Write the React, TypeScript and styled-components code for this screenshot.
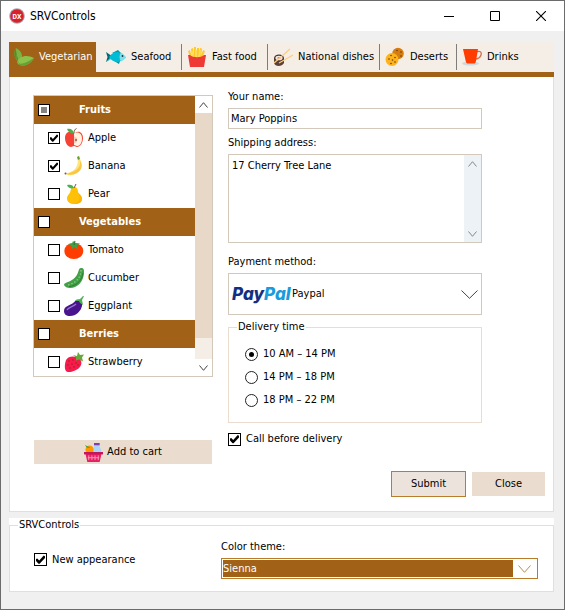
import React, { useEffect, useRef, useState } from "react";
import styled, { createGlobalStyle } from "styled-components";

const color = {
  sienna: "#a16116",
  siennaEdge: "#b87c2a",
  sand: "#eaddd0",
  cream: "#f5eee7",
  field: "#d3c9bb",
  thumb: "#e8d8c7",
  shell: "#f0f0f0",
};

const GlobalStyle = createGlobalStyle`
  * { box-sizing: border-box; }
  body { margin: 0; background: ${color.shell}; }
  body, button, input, select, textarea {
    font-family: "DejaVu Sans Condensed", "DejaVu Sans", sans-serif;
    font-size: 11px;
    line-height: 14px;
    color: #000;
  }
`;

/* ---------- window frame ---------- */

const Window = styled.div`
  display: flex;
  flex-direction: column;
  min-height: 100vh;
  border: 1px solid #6b6b6b;
  background: ${color.shell};
`;

const TitleBar = styled.header`
  display: flex;
  align-items: center;
  height: 30px;
  padding-left: 8px;
  background: #fff;
`;

const Title = styled.h1`
  flex: 1;
  margin: 0 0 0 5px;
  font-size: 12px;
  font-weight: 400;
  line-height: 16px;
`;

const CaptionButton = styled.button`
  display: grid;
  place-items: center;
  width: 46px;
  height: 30px;
  padding: 0;
  border: 0;
  background: transparent;
`;

const Body = styled.main`
  display: flex;
  flex-direction: column;
  gap: 6px;
  padding: 11px 10px 17px 8px;
`;

/* ---------- tabs ---------- */

const TabBar = styled.nav`
  display: flex;
  height: 35px;
  background: ${color.cream};
  border-bottom: 5px solid ${color.sienna};
`;

const Tab = styled.button<{ $width: number; $inset: number; $active?: boolean; $divider?: boolean }>`
  position: relative;
  display: flex;
  align-items: center;
  flex: 0 0 ${(p) => p.$width}px;
  gap: 5px;
  height: 30px;
  padding: 0 0 0 ${(p) => p.$inset}px;
  border: 0;
  white-space: nowrap;
  background: ${(p) => (p.$active ? color.sienna : "transparent")};
  color: ${(p) => (p.$active ? "#fff" : "#000")};

  &::after {
    content: "";
    display: ${(p) => (p.$divider ? "block" : "none")};
    position: absolute;
    right: 0;
    top: 2px;
    bottom: 2px;
    width: 1px;
    background: #7d7d7d;
  }
`;

const Page = styled.section`
  display: grid;
  grid-template-columns: 180px minmax(0, 1fr);
  column-gap: 15px;
  padding: 13px 8px 14px 23px;
  border: 1px solid ${color.sand};
  border-top: 0;
  background: #fff;
`;

/* ---------- product list ---------- */

const ListColumn = styled.div`
  display: flex;
  flex-direction: column;
  gap: 63px;
  padding-top: 5px;
`;

const ListBox = styled.div`
  display: flex;
  border: 1px solid ${color.field};
`;

const Items = styled.div`
  flex: 1;
`;

const GroupRow = styled.label`
  display: flex;
  align-items: center;
  gap: 29px;
  height: 28px;
  padding-left: 4px;
  background: ${color.sienna};
  color: #fff;
  font-weight: 700;
`;

const ItemRow = styled.label`
  display: flex;
  align-items: center;
  height: 28px;
  padding-left: 14px;
  gap: 4px;
`;

const Scroll = styled.div<{ $track: string }>`
  display: flex;
  flex-direction: column;
  justify-content: space-between;
  flex: 0 0 17px;
  background: ${(p) => p.$track};
`;

const ScrollButton = styled.button<{ $fill: string }>`
  display: grid;
  place-items: center;
  height: 17px;
  padding: 0;
  border: 0;
  background: ${(p) => p.$fill};
`;

const ScrollThumb = styled.div`
  flex: 0 0 225px;
  margin-bottom: auto;
  background: ${color.thumb};
`;

/* ---------- form controls ---------- */

const Check = styled.input`
  appearance: none;
  display: grid;
  place-items: center;
  flex: none;
  width: 12px;
  height: 12px;
  margin: 0;
  border: 1px solid #000;
  background: #fff;

  &::before {
    content: "";
    width: 8px;
    height: 8px;
  }
  &:checked::before {
    background: #000;
    clip-path: polygon(0 45%, 14% 38%, 36% 62%, 86% 6%, 100% 14%, 100% 32%, 40% 96%, 28% 96%, 0 66%);
  }
  &:indeterminate::before {
    width: 6px;
    height: 6px;
    background: #848484;
    clip-path: none;
  }
`;

const LargeCheck = styled(Check)`
  width: 13px;
  height: 13px;

  &::before {
    width: 9px;
    height: 9px;
  }
`;

const Radio = styled.input`
  appearance: none;
  display: grid;
  place-items: center;
  flex: none;
  width: 13px;
  height: 13px;
  margin: 0;
  border: 1px solid #222;
  border-radius: 50%;
  background: #fff;

  &:checked::before {
    content: "";
    width: 5px;
    height: 5px;
    border-radius: 50%;
    background: #000;
  }
`;

const Choice = styled.label`
  display: flex;
  align-items: center;
  gap: 5px;
`;

const Form = styled.form`
  display: flex;
  flex-direction: column;
`;

const Fields = styled.div`
  display: flex;
  flex-direction: column;
  padding-right: 63px;
`;

const FieldLabel = styled.label`
  height: 14px;
  margin-bottom: 4px;
`;

const TextInput = styled.input`
  height: 21px;
  margin-bottom: 7px;
  padding: 0 2px;
  border: 1px solid ${color.field};
  border-radius: 0;
  outline: none;
`;

const AreaBox = styled.div`
  display: flex;
  height: 89px;
  margin-bottom: 12px;
  border: 1px solid ${color.field};
`;

const Area = styled.textarea`
  flex: 1;
  min-width: 0;
  padding: 4px 3px;
  border: 0;
  outline: none;
  resize: none;
  overflow: hidden;
`;

const Combo = styled.div`
  display: flex;
  align-items: center;
  height: 42px;
  margin-bottom: 5px;
  padding: 0 3px;
  border: 1px solid ${color.field};
`;

const PayPalMark = styled.span`
  flex: 0 0 60px;
  font-family: Inter, sans-serif;
  font-size: 17px;
  font-style: italic;
  font-weight: 800;
  line-height: 24px;
  color: #123083;
`;

const PalPart = styled.span`
  color: #1a9bdc;
`;

const ComboSelect = styled.select`
  appearance: none;
  flex: 1;
  min-width: 0;
  height: 40px;
  padding: 0;
  border: 0;
  outline: none;
  background: transparent;
`;

const TimeGroup = styled.fieldset`
  display: flex;
  flex-direction: column;
  gap: 9px;
  min-width: 0;
  height: 103px;
  margin: 0 0 9px;
  padding: 13px 16px 0;
  border: 1px solid ${color.sand};
`;

const Legend = styled.legend`
  padding: 0 1px;
  margin-left: -8px;
`;

const Actions = styled.div`
  display: flex;
  justify-content: flex-end;
  align-items: center;
  gap: 6px;
  margin-top: 25px;
`;

const PushButton = styled.button`
  display: flex;
  align-items: center;
  justify-content: center;
  gap: 4px;
  height: 24px;
  padding: 0;
  border: 0;
  background: ${color.sand};
`;

const CartButton = styled(PushButton)`
  margin: 0 1px;
`;

const CloseButton = styled(PushButton)`
  width: 73px;
`;

const SubmitButton = styled(PushButton)`
  width: 75px;
  height: 26px;
  border: 1px solid ${color.siennaEdge};
  background: #ebe3dc;
`;

/* ---------- appearance panel ---------- */

const AppearancePanel = styled.div`
  background: #fff;
`;

const AppearanceGroup = styled.fieldset`
  display: grid;
  grid-template-columns: 187px minmax(0, 1fr);
  min-width: 0;
  margin: 0;
  padding: 8px 15px 12px 24px;
  border: 1px solid ${color.sand};
`;

const PanelLegend = styled.legend`
  margin-left: -16px;
  padding: 0 1px;
`;

const ThemeField = styled.div`
  display: flex;
  flex-direction: column;
`;

const ThemeCombo = styled.div`
  display: flex;
  align-items: center;
  height: 21px;
  padding: 1px 6px 1px 1px;
  gap: 5px;
  border: 1px solid ${color.siennaEdge};
`;

const ThemeSelect = styled.select`
  appearance: none;
  flex: 1;
  min-width: 0;
  height: 17px;
  padding: 0;
  border: 0;
  border-radius: 0;
  outline: none;
  background: ${color.sienna};
  color: #fff;
`;

/* ---------- icons ---------- */

const Svg = styled.svg`
  flex: none;
  display: block;
`;

type IconProps = { size?: number; children: React.ReactNode };
const Icon = ({ size = 20, children }: IconProps) => (
  <Svg width={size} height={size} viewBox="0 0 20 20" aria-hidden="true">
    {children}
  </Svg>
);

type ChevronProps = { w: number; h: number; up?: boolean; stroke?: string };
const Chevron = ({ w, h, up, stroke = "#444" }: ChevronProps) => (
  <Svg width={w} height={h} viewBox={`0 0 ${w} ${h}`} aria-hidden="true">
    <polyline
      fill="none"
      stroke={stroke}
      points={
        up
          ? `0.5,${h - 0.5} ${w / 2},0.7 ${w - 0.5},${h - 0.5}`
          : `0.5,0.5 ${w / 2},${h - 0.7} ${w - 0.5},0.5`
      }
    />
  </Svg>
);

const Leaf = () => (
  <Icon>
    <path d="M2 1c4 2 6 5 6 8 0 2-1 4-4 5C0 11-1 6 2 1z" fill="#7cb342" />
    <path d="M2 1c0 5 1 9 3 13C0 12-1 6 2 1z" fill="#558b2f" />
    <path d="M3 15c2-6 10-8 17-4-3 6-11 10-16 6z" fill="#8bc34a" />
    <path d="M20 11c-3 6-11 10-16 6 6 0 11-3 16-6z" fill="#689f38" />
    <path d="M2.500 8c0 4 1 7 3 9" stroke="#689f38" strokeWidth=".8" fill="none" />
  </Icon>
);

const Fish = () => (
  <Icon>
    <path d="M0 5l5 3.500v3L0 15l1.500-5z" fill="#006978" />
    <path d="M0 15l5-5 1 1.500z" fill="#4dd0e1" />
    <path d="M6 6l6-3 3 3zM8 14l5 3 1-3z" fill="#0097a7" />
    <path d="M3 10c4-5 9-7 14-2l3 2.500-3 2c-5 4-10 3-14-2.500z" fill="#00bcd4" />
    <path d="M15 5.500c2 1 4 3 5 5-1 1.500-3 3-5 4-2-3-2-6 0-9z" fill="#80deea" />
    <circle cx="16.500" cy="9" r=".9" fill="#263238" />
  </Icon>
);

const Fries = () => (
  <Icon>
    <path d="M1 4l2-1 2 8H3zM4 2l2-1 1 9H5zM7 0h2v10H7zM10 1h2v9h-2zM13 1l2 .5L14 10h-2zM16 3l2 1-3 8h-2z" fill="#ffc928" />
    <path d="M4 5l2-1 1 8H5zM8 3h2v8H8zM12 3h2l-1 8h-2z" fill="#ffdc60" />
    <path d="M1 8l2 0c3 3 11 3 14 0h2l-2 12H3z" fill="#ee3934" />
  </Icon>
);

const Sushi = () => (
  <Icon>
    <path d="M1 11v5c1 4 8 4 10 0v-5z" fill="#5d4037" />
    <ellipse cx="6" cy="11" rx="5" ry="3.500" fill="#4e342e" />
    <ellipse cx="6" cy="11" rx="3.600" ry="2.300" fill="#efebe9" />
    <ellipse cx="6" cy="11" rx="1.700" ry="1.100" fill="#ef6c57" />
    <path d="M1 16L17 2M6 16l14-8" stroke="#ffcc80" strokeWidth="1.200" />
  </Icon>
);

const Cookies = () => (
  <Icon>
    <circle cx="13" cy="6.500" r="5.800" fill="#d67d10" />
    <circle cx="7" cy="12.500" r="6.500" fill="#fdb31b" />
    <g fill="#6d3a16">
      <circle cx="12" cy="3.500" r=".8" />
      <circle cx="16" cy="5" r=".8" />
      <circle cx="16" cy="9" r=".8" />
      <circle cx="6" cy="8.500" r=".8" />
      <circle cx="10" cy="10.500" r=".8" />
      <circle cx="4" cy="12" r=".8" />
      <circle cx="7.500" cy="13" r=".8" />
      <circle cx="10" cy="15" r=".8" />
      <circle cx="6" cy="16.500" r=".8" />
    </g>
  </Icon>
);

const Cup = () => (
  <Icon>
    <ellipse cx="8.500" cy="16.500" rx="8.500" ry="2" fill="#cfd8dc" />
    <path d="M14 5c4-1.500 6 0 5 3s-3 4-6 4" stroke="#d96b4a" strokeWidth="1.300" fill="none" />
    <path d="M1 2h15l-2 12c-.5 2-1 2.500-2 2.500H6c-1 0-2-.5-2.300-2.500z" fill="#ff3d00" />
  </Icon>
);

const Apple = () => (
  <Icon>
    <path d="M9 5C5 2 1 5 1 10s3 9 6 9l3-1 3 1c3 0 6-4 6-9s-4-8-8-5z" fill="#f44336" />
    <path d="M10 5.500c4-2.500 8 0 8 5S15.500 18 13 18l-3-1z" fill="#fff3e0" />
    <path d="M10 8.500c4 0 5 6 0 7z" fill="#ffccbc" />
    <ellipse cx="12" cy="12" rx=".7" ry="1.200" fill="#5d4037" />
    <path d="M10 5c0-2 1-4 2.500-4.500" stroke="#795548" fill="none" />
    <path d="M3 1c4-1 6 1 7 4-3 1-6-1-7-4z" fill="#4caf50" />
  </Icon>
);

const Banana = () => (
  <Icon>
    <path d="M13 1l2-1 1 3c4 7 1 13-6 15.500-4 1.300-7 1-9-1 6-1 10-3 12-8 1-3 1-6 0-8.500z" fill="#ffe57f" />
    <path d="M15.500 4c2 6-1 11-13 13.800 2 1.200 5 1.200 7.500.5 7-2.300 10-8 5.500-14.300z" fill="#fbc740" />
    <path d="M13 1l2-1 1 3-2 1z" fill="#689f38" />
    <circle cx="1.500" cy="17.500" r="1" fill="#795548" />
  </Icon>
);

const Pear = () => (
  <Icon>
    <path d="M10 3c3 0 4 2 4 5 1 2 4 3 4 7 0 3-3 5-7.500 5S3 18 3 14.500C3 11 6 10 6.500 7 7 4 8 3 10 3z" fill="#ffc107" />
    <path d="M14 9c3 5 1 9-4 10.800 6 0 8-2 8-5 0-2-2-4-4-5.800z" fill="#ffb300" />
    <path d="M10 4l2-4" stroke="#795548" />
    <path d="M3 1c4-1 6 0 7 3-3 1-6 0-7-3z" fill="#4caf50" />
  </Icon>
);

const Tomato = () => (
  <Icon>
    <ellipse cx="9.800" cy="11" rx="9.500" ry="8" fill="#ff3d00" />
    <path d="M4 4l4-.5L9 1l2 2 5 .5-3 2 1 4-3.500-2.500L8 9l-.500-3z" fill="#43a047" />
    <path d="M10 5l1-4" stroke="#2e7d32" strokeWidth="1.200" />
  </Icon>
);

const Cucumber = () => (
  <Icon>
    <path d="M17 0c3 0 3 2 3 4 0 9-6 16-14 16-3 0-5-1-6-3 0-2 2-2 4-3C9 12 13 9 14.500 3 15 1 15.500 0 17 0z" fill="#43a047" />
    <path d="M17 2C17 10 11 16 3 17" stroke="#81c784" strokeWidth="1.400" strokeDasharray="1.500 1.800" fill="none" />
    <path d="M19 5c-1 8-7 13-14 13.500" stroke="#2e7d32" fill="none" />
  </Icon>
);

const Eggplant = () => (
  <Icon>
    <path d="M12 4c4-1 7 2 6 6-1 5-6 10-12 10C2 20 0 18 0 15c0-6 8-5 12-11z" fill="#4a148c" />
    <path d="M3 14c1-3 6-3 9-6" stroke="#9575cd" strokeWidth="1.300" fill="none" />
    <path d="M12 4l4-1 3-3h1l-2 4 1 5-3-2-1-2-3 0z" fill="#4caf50" />
  </Icon>
);

const Strawberry = () => (
  <Icon>
    <path d="M2 8c3-5 10-4 14-1 3 4 1 9-4 11-4 2-8 3-10 1-2-3-1-8 0-11z" fill="#f9194d" />
    <path d="M9 3l4 1 1-4 2 3 4-.5-2 3 1 4-4-2-3 1 0-3z" fill="#66a83a" />
    <g fill="#b3262a">
      <circle cx="5" cy="9" r=".9" />
      <circle cx="9" cy="8" r=".9" />
      <circle cx="4" cy="13" r=".9" />
      <circle cx="8" cy="12" r=".9" />
      <circle cx="12" cy="11" r=".9" />
      <circle cx="6" cy="16" r=".9" />
      <circle cx="10" cy="15" r=".9" />
      <circle cx="14" cy="13" r=".9" />
    </g>
  </Icon>
);

const Basket = () => (
  <Icon size={19}>
    <circle cx="6" cy="7" r="4.500" fill="#ff9800" />
    <path d="M1 2l6 3-4 0z" fill="#43a047" />
    <path d="M11 3h5l2 4v4h-8V6z" fill="#a9d6f8" />
    <path d="M10.500 0h6v2.500h-6z" fill="#7e3fb5" />
    <path d="M1.500 11h17l-2 9h-13z" fill="#e91e63" />
    <path d="M0 9.500h20v2.500H0z" fill="#c2185b" />
    <path d="M5 13v5M8.300 13v5M11.600 13v5M15 13v5M4 15.500h12" stroke="#f8a8c4" strokeWidth=".9" />
  </Icon>
);

const AppMark = () => (
  <Svg width="16" height="16" viewBox="0 0 16 16" aria-hidden="true">
    <circle cx="8" cy="8" r="7.800" fill="#a9a9a9" />
    <circle cx="8" cy="8" r="6.800" fill="#d9202e" />
    <text x="8" y="10.500" textAnchor="middle" fontFamily="Roboto, sans-serif" fontSize="7" fontWeight="700" fill="#fff">
      DX
    </text>
  </Svg>
);

/* ---------- data ---------- */

const tabs = [
  { label: "Vegetarian", icon: <Leaf />, width: 87, inset: 5, divider: false },
  { label: "Seafood", icon: <Fish />, width: 86, inset: 10, divider: true },
  { label: "Fast food", icon: <Fries />, width: 86, inset: 5, divider: true },
  { label: "National dishes", icon: <Sushi />, width: 112, inset: 5, divider: true },
  { label: "Deserts", icon: <Cookies />, width: 77, inset: 5, divider: true },
  { label: "Drinks", icon: <Cup />, width: 70, inset: 5, divider: false },
];

const groups = [
  {
    name: "Fruits",
    partial: true,
    items: [
      { name: "Apple", icon: <Apple />, on: true },
      { name: "Banana", icon: <Banana />, on: true },
      { name: "Pear", icon: <Pear />, on: false },
    ],
  },
  {
    name: "Vegetables",
    partial: false,
    items: [
      { name: "Tomato", icon: <Tomato />, on: false },
      { name: "Cucumber", icon: <Cucumber />, on: false },
      { name: "Eggplant", icon: <Eggplant />, on: false },
    ],
  },
  {
    name: "Berries",
    partial: false,
    items: [{ name: "Strawberry", icon: <Strawberry />, on: false }],
  },
];

const times = ["10 AM – 14 PM", "14 PM – 18 PM", "18 PM – 22 PM"];

const GroupCheck = ({ partial }: { partial: boolean }) => {
  const ref = useRef<HTMLInputElement>(null);
  useEffect(() => {
    if (ref.current) ref.current.indeterminate = partial;
  }, [partial]);
  return <Check type="checkbox" ref={ref} />;
};

export default function App() {
  const [active, setActive] = useState("Vegetarian");

  return (
    <Window>
      <GlobalStyle />
      <TitleBar>
        <AppMark />
        <Title>SRVControls</Title>
        <CaptionButton aria-label="Minimize">
          <Svg width="10" height="10" viewBox="0 0 10 10">
            <path d="M0 5.500h10" stroke="#000" />
          </Svg>
        </CaptionButton>
        <CaptionButton aria-label="Maximize">
          <Svg width="10" height="10" viewBox="0 0 10 10">
            <path d="M.5.5h9v9h-9z" stroke="#000" fill="none" />
          </Svg>
        </CaptionButton>
        <CaptionButton aria-label="Close window">
          <Svg width="10" height="10" viewBox="0 0 10 10">
            <path d="M0 0l10 10M10 0L0 10" stroke="#000" strokeWidth="1.100" />
          </Svg>
        </CaptionButton>
      </TitleBar>

      <Body>
        <div>
          <TabBar>
            {tabs.map((t) => (
              <Tab
                key={t.label}
                type="button"
                $width={t.width}
                $inset={t.inset}
                $divider={t.divider}
                $active={active === t.label}
                onClick={() => setActive(t.label)}
              >
                {t.icon}
                {t.label}
              </Tab>
            ))}
          </TabBar>

          <Page>
            <ListColumn>
              <ListBox>
                <Items>
                  {groups.map((g) => (
                    <React.Fragment key={g.name}>
                      <GroupRow>
                        <GroupCheck partial={g.partial} />
                        {g.name}
                      </GroupRow>
                      {g.items.map((item) => (
                        <ItemRow key={item.name}>
                          <Check type="checkbox" defaultChecked={item.on} />
                          {item.icon}
                          {item.name}
                        </ItemRow>
                      ))}
                    </React.Fragment>
                  ))}
                </Items>
                <Scroll $track={color.cream}>
                  <ScrollButton type="button" aria-label="Scroll up" $fill="#fff">
                    <Chevron w={9} h={6} up />
                  </ScrollButton>
                  <ScrollThumb />
                  <ScrollButton type="button" aria-label="Scroll down" $fill="#fff">
                    <Chevron w={9} h={6} />
                  </ScrollButton>
                </Scroll>
              </ListBox>
              <CartButton type="button">
                <Basket />
                Add to cart
              </CartButton>
            </ListColumn>

            <Form onSubmit={(e) => e.preventDefault()}>
              <Fields>
                <FieldLabel htmlFor="name">Your name:</FieldLabel>
                <TextInput id="name" defaultValue="Mary Poppins" />
                <FieldLabel htmlFor="address">Shipping address:</FieldLabel>
                <AreaBox>
                  <Area id="address" defaultValue="17 Cherry Tree Lane" />
                  <Scroll $track="#edf2f6">
                    <ScrollButton type="button" aria-label="Scroll address up" $fill="transparent">
                      <Chevron w={9} h={6} up stroke="#888" />
                    </ScrollButton>
                    <ScrollButton type="button" aria-label="Scroll address down" $fill="transparent">
                      <Chevron w={9} h={6} stroke="#888" />
                    </ScrollButton>
                  </Scroll>
                </AreaBox>
                <FieldLabel htmlFor="payment">Payment method:</FieldLabel>
                <Combo>
                  <PayPalMark aria-hidden="true">
                    Pay<PalPart>Pal</PalPart>
                  </PayPalMark>
                  <ComboSelect id="payment">
                    <option>Paypal</option>
                  </ComboSelect>
                  <Chevron w={17} h={9} />
                </Combo>
                <TimeGroup>
                  <Legend>Delivery time</Legend>
                  {times.map((t, i) => (
                    <Choice key={t}>
                      <Radio type="radio" name="time" defaultChecked={i === 0} />
                      {t}
                    </Choice>
                  ))}
                </TimeGroup>
                <Choice>
                  <LargeCheck type="checkbox" defaultChecked />
                  Call before delivery
                </Choice>
              </Fields>
              <Actions>
                <SubmitButton type="submit">Submit</SubmitButton>
                <CloseButton type="button">Close</CloseButton>
              </Actions>
            </Form>
          </Page>
        </div>

        <AppearancePanel>
          <AppearanceGroup>
            <PanelLegend>SRVControls</PanelLegend>
            <Choice>
              <LargeCheck type="checkbox" defaultChecked />
              New appearance
            </Choice>
            <ThemeField>
              <FieldLabel htmlFor="theme">Color theme:</FieldLabel>
              <ThemeCombo>
                <ThemeSelect id="theme">
                  <option>Sienna</option>
                </ThemeSelect>
                <Chevron w={13} h={8} stroke="#c08a45" />
              </ThemeCombo>
            </ThemeField>
          </AppearanceGroup>
        </AppearancePanel>
      </Body>
    </Window>
  );
}
